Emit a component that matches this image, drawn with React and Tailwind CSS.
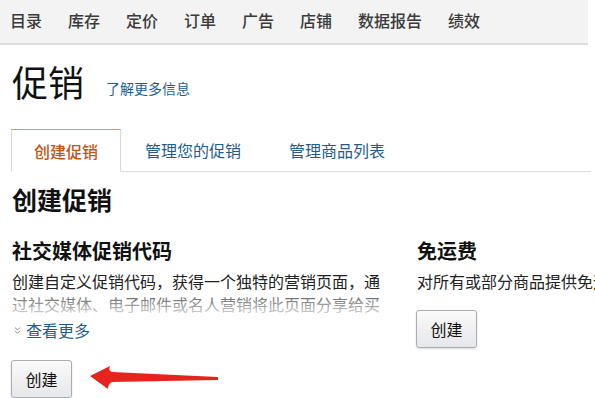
import { ChevronsDown } from "lucide-react";

const cjk = { fontFamily: '"Noto Sans CJK SC", "Noto Sans", sans-serif' };

const navItems = ["目录", "库存", "定价", "订单", "广告", "店铺", "数据报告", "绩效"];

function CreateButton() {
  return (
    <button className="w-[61px] h-[38px] rounded-[3px] border border-[#a9acb1] bg-gradient-to-b from-[#fafafa] to-[#e6e7ea] text-[16px] text-[#111] shadow-[0_1px_2px_rgba(0,0,0,0.15)]">
      创建
    </button>
  );
}

export default function App() {
  return (
    <div className="relative w-[595px] h-[398px] overflow-hidden bg-white" style={cjk}>
      {/* top nav */}
      <div className="flex items-center gap-[26px] w-[588px] h-[45px] pl-[10px] pb-[4px] bg-[#f3f3f3] border-b-2 border-[#dedede]">
        {navItems.map((item) => (
          <span key={item} className="text-[16px] font-medium text-[#3a3a3a]">
            {item}
          </span>
        ))}
      </div>

      <div className="pl-[12px]">
        {/* title */}
        <div className="flex items-end gap-[22px] mt-[18px]">
          <h1 className="text-[36px] leading-none text-[#111]">促销</h1>
          <a className="text-[14px] leading-none pb-[4px] text-[#1c5e94]">了解更多信息</a>
        </div>

        {/* tabs */}
        <div className="flex mt-[30px] h-[43px] -ml-[1px] w-[580px] border-b border-[#dcdcdc]">
          <div className="flex items-center px-[22px] -mb-px bg-white border border-[#d8d8d8] border-t-[#d79a5e] border-b-white text-[16px] text-[#c0561a] font-medium">
            创建促销
          </div>
          <div className="flex items-center px-[24px] text-[16px] text-[#1f5c8d]">管理您的促销</div>
          <div className="flex items-center px-[24px] text-[16px] text-[#1f5c8d]">管理商品列表</div>
        </div>

        <h2 className="mt-[15px] text-[25px] leading-none font-bold text-[#111]">创建促销</h2>

        <div className="flex gap-[32px] mt-[29px]">
          {/* social promo code */}
          <div className="w-[373px] shrink-0">
            <h3 className="text-[20px] leading-none font-bold text-[#111]">社交媒体促销代码</h3>
            <div className="relative h-[44px] mt-[9px] overflow-hidden">
              <p className="text-[16px] leading-[23px] text-[#222]">
                创建自定义促销代码，获得一个独特的营销页面，通过社交媒体、电子邮件或名人营销将此页面分享给买
              </p>
              <div className="absolute inset-x-0 top-[22px] h-[22px] bg-gradient-to-b from-white/20 to-white/80" />
            </div>
            <div className="flex items-center gap-[3px] mt-[6px] h-[20px]">
              <ChevronsDown size={11} strokeWidth={1.8} className="text-[#777]" />
              <span className="text-[16px] text-[#1f5c8d]">查看更多</span>
            </div>
            <div className="mt-[20px] -ml-px">
              <CreateButton />
            </div>
          </div>

          {/* free shipping */}
          <div className="shrink-0 whitespace-nowrap">
            <h3 className="text-[20px] leading-none font-bold text-[#111]">免运费</h3>
            <p className="mt-[9px] text-[16px] leading-[23px] text-[#222]">对所有或部分商品提供免运费优惠。</p>
            <div className="mt-[17px] -ml-[1px]">
              <CreateButton />
            </div>
          </div>
        </div>
      </div>

      {/* red annotation arrow */}
      <svg className="absolute left-[88px] top-[362px]" width="134" height="30" viewBox="0 0 134 30">
        <path
          d="M2 14 L22 4 Q20 9 24 10 L130 15 L130 18 L24 20 Q20 22 20 27 Z"
          fill="#e8231e"
        />
      </svg>
    </div>
  );
}
